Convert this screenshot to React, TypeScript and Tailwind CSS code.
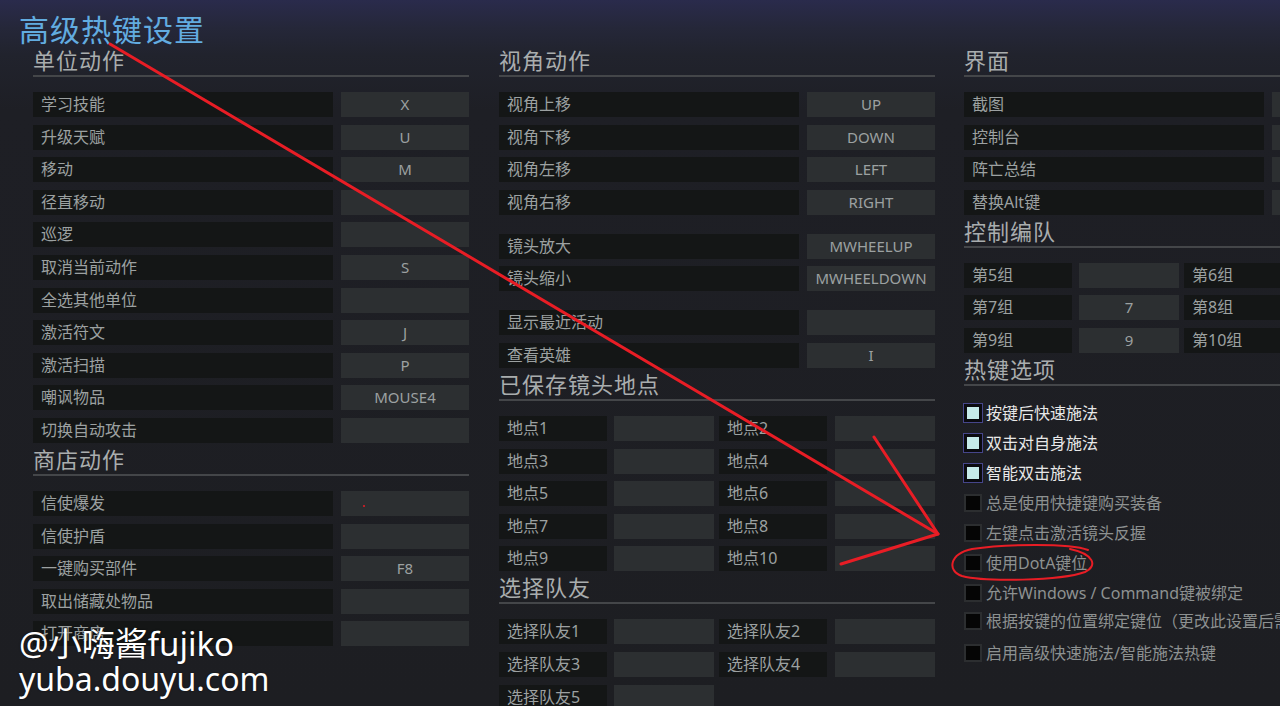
import React from 'react'

type Bind = { label: string; key?: string }

const unitActions: Bind[] = [
  { label: '学习技能', key: 'X' },
  { label: '升级天赋', key: 'U' },
  { label: '移动', key: 'M' },
  { label: '径直移动' },
  { label: '巡逻' },
  { label: '取消当前动作', key: 'S' },
  { label: '全选其他单位' },
  { label: '激活符文', key: 'J' },
  { label: '激活扫描', key: 'P' },
  { label: '嘲讽物品', key: 'MOUSE4' },
  { label: '切换自动攻击' }
]

const shopActions: Bind[] = [
  { label: '信使爆发' },
  { label: '信使护盾' },
  { label: '一键购买部件', key: 'F8' },
  { label: '取出储藏处物品' },
  { label: '打开商店' }
]

const cameraGroups: Bind[][] = [
  [
    { label: '视角上移', key: 'UP' },
    { label: '视角下移', key: 'DOWN' },
    { label: '视角左移', key: 'LEFT' },
    { label: '视角右移', key: 'RIGHT' }
  ],
  [
    { label: '镜头放大', key: 'MWHEELUP' },
    { label: '镜头缩小', key: 'MWHEELDOWN' }
  ],
  [{ label: '显示最近活动' }, { label: '查看英雄', key: 'I' }]
]

const locations: Bind[] = Array.from({ length: 10 }, (_, i) => ({ label: `地点${i + 1}` }))
const teammates: Bind[] = Array.from({ length: 5 }, (_, i) => ({ label: `选择队友${i + 1}` }))

const interfaceBinds: Bind[] = [
  { label: '截图' },
  { label: '控制台' },
  { label: '阵亡总结' },
  { label: '替换Alt键' }
]

const controlGroups: Bind[] = [
  { label: '第5组' },
  { label: '第6组' },
  { label: '第7组', key: '7' },
  { label: '第8组' },
  { label: '第9组', key: '9' },
  { label: '第10组' }
]

const options = [
  { label: '按键后快速施法', on: true, h: 'h-[30px]' },
  { label: '双击对自身施法', on: true, h: 'h-[30px]' },
  { label: '智能双击施法', on: true, h: 'h-[30px]' },
  { label: '总是使用快捷键购买装备', on: false, h: 'h-[30px]' },
  { label: '左键点击激活镜头反握', on: false, h: 'h-[30px]' },
  { label: '使用DotA键位', on: false, h: 'h-[30px]' },
  { label: '允许Windows / Command键被绑定', on: false, h: 'h-[30px]' },
  { label: '根据按键的位置绑定键位（更改此设置后需要重启）', on: false, h: 'h-[27px]' },
  { label: '启用高级快速施法/智能施法热键', on: false, h: 'h-[36px]' }
]

const SectionTitle: React.FC<{ title: string }> = ({ title }) => (
  <div className="pt-[4px]">
    <div className="text-[22px] leading-[24px] tracking-[1px] text-[#a9adae]">{title}</div>
    <div className="mt-[3px] h-[2px] bg-[#444649]" />
  </div>
)

const Row: React.FC<{ bind: Bind }> = ({ bind }) => (
  <div className="flex h-[25px] leading-[25px]">
    <div className="w-[300px] bg-[#141616] pl-[8px] text-[16px] text-[#9ca1a1]">{bind.label}</div>
    <div className="ml-[8px] w-[128px] bg-[#2c2f31] text-center text-[15px] text-[#9ca1a1]">
      {bind.key}
    </div>
  </div>
)

const Rows: React.FC<{ binds: Bind[] }> = ({ binds }) => (
  <div className="flex flex-col gap-[7.6px]">
    {binds.map((b) => (
      <Row key={b.label} bind={b} />
    ))}
  </div>
)

// two label/key pairs per line: 108 | 7 | 100 | 5 | 108 | 8 | 100
const GridRows: React.FC<{ binds: Bind[] }> = ({ binds }) => (
  <div className="grid grid-cols-[108px_107px_113px_108px] gap-y-[7.6px] leading-[25px]">
    {binds.map((b, i) => (
      <React.Fragment key={b.label}>
        <div className={i % 2 === 1 ? 'pl-[5px]' : ''}>
          <div className="h-[25px] w-[108px] bg-[#141616] pl-[8px] text-[16px] text-[#9ca1a1]">
            {b.label}
          </div>
        </div>
        <div className={i % 2 === 1 ? 'pl-[8px]' : 'pl-[7px]'}>
          <div className="h-[25px] w-[100px] bg-[#2c2f31] text-center text-[15px] text-[#9ca1a1]">
            {b.key}
          </div>
        </div>
      </React.Fragment>
    ))}
  </div>
)

const Section: React.FC<{ title: string; children: React.ReactNode }> = ({ title, children }) => (
  <div>
    <SectionTitle title={title} />
    <div className="mt-[15px]">{children}</div>
  </div>
)

const Checkbox: React.FC<{ on: boolean }> = ({ on }) =>
  on ? (
    <div className="h-[18px] w-[18px] shrink-0 border-[3px] border-[#0b0b10] bg-[#c6eaea] shadow-[0_0_0_1px_#45458a]" />
  ) : (
    <div className="h-[18px] w-[18px] shrink-0 border-[2px] border-[#2c2e30] bg-[#050505]" />
  )

const Annotations: React.FC = () => (
  <svg className="pointer-events-none absolute inset-0" width="1280" height="706" viewBox="0 0 1280 706">
    <g stroke="#e81d25" strokeWidth="3" fill="none" strokeLinecap="round" strokeLinejoin="round">
      <path d="M110 44 L938 534" />
      <path d="M874 437 L938 534 L841 564" />
      <path
        d="M1088 550 C1070 543 1005 544 972 549 C949 554 947 571 962 576 C985 582 1060 581 1085 572 C1098 566 1094 554 1070 549"
        strokeWidth="2"
      />
    </g>
    <circle cx="364" cy="506" r="1" fill="#e81d25" />
  </svg>
)

export default function App() {
  return (
    <div className="relative h-[706px] w-[1280px] overflow-hidden bg-[linear-gradient(180deg,#2a2b4c_0px,#252739_28px,#21232d_55px,#1e1f25_110px,#1d1e22_100%)] font-['Noto_Sans','Noto_Sans_CJK_SC',sans-serif]">
      <div className="h-[44px] pl-[19px] pt-[15px] text-[30px] leading-[29px] tracking-[1px] text-[#62ace0]">
        高级热键设置
      </div>

      <div className="flex pl-[33px]">
        <div className="flex w-[436px] shrink-0 flex-col">
          <Section title="单位动作">
            <Rows binds={unitActions} />
          </Section>
          <Section title="商店动作">
            <Rows binds={shopActions} />
          </Section>
        </div>

        <div className="ml-[30px] flex w-[436px] shrink-0 flex-col">
          <Section title="视角动作">
            <div className="flex flex-col gap-[19px]">
              {cameraGroups.map((g) => (
                <Rows key={g[0].label} binds={g} />
              ))}
            </div>
          </Section>
          <Section title="已保存镜头地点">
            <GridRows binds={locations} />
          </Section>
          <Section title="选择队友">
            <GridRows binds={teammates} />
          </Section>
        </div>

        <div className="ml-[29px] flex w-[436px] shrink-0 flex-col">
          <Section title="界面">
            <Rows binds={interfaceBinds} />
          </Section>
          <Section title="控制编队">
            <GridRows binds={controlGroups} />
          </Section>
          <div>
            <SectionTitle title="热键选项" />
            <div className="mt-[12px] flex flex-col">
              {options.map((o) => (
                <div key={o.label} className={`flex items-center gap-[4px] ${o.h}`}>
                  <Checkbox on={o.on} />
                  <span
                    className={`whitespace-nowrap text-[16px] ${
                      o.on ? 'text-[#e8e8e8]' : 'text-[#8d9191]'
                    }`}
                  >
                    {o.label}
                  </span>
                </div>
              ))}
            </div>
          </div>
        </div>
      </div>

      <div className="pointer-events-none absolute left-[19px] top-[626px] leading-[36px] text-white [text-shadow:0_0_2px_rgba(0,0,0,0.6)]">
        <div className="text-[33px]">@小嗨酱fujiko</div>
        <div className="mt-[-1px] text-[32px]">yuba.douyu.com</div>
      </div>

      <Annotations />
    </div>
  )
}
